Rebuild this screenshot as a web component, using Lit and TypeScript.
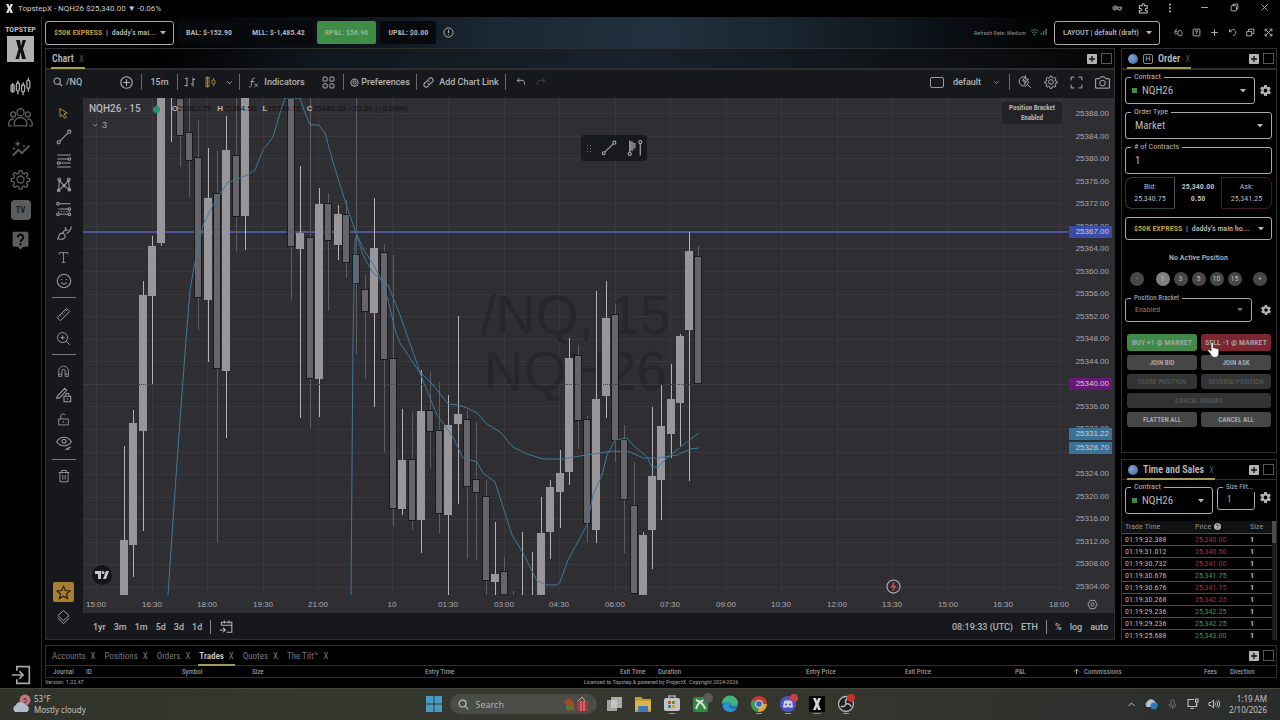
import { LitElement, html, svg, css, nothing } from "lit";
import { customElement } from "lit/decorators.js";
import { classMap } from "lit/directives/class-map.js";
import { styleMap } from "lit/directives/style-map.js";

const icons: Record<string, unknown> = {
  candles: svg`<path d="M3 10v9M3 8v2M9 5v4M9 17v4M15 7v4M15 18v4M21 2v3M21 14v4"/><rect x="1.3" y="10" width="3.4" height="8" rx="1.2"/><rect x="7.3" y="8" width="3.4" height="9" rx="1.2"/><rect x="13.3" y="10" width="3.4" height="8" rx="1.2"/><rect x="19.3" y="5" width="3.4" height="9" rx="1.2"/>`,
  people: svg`<circle cx="12" cy="7" r="3.4"/><circle cx="5" cy="9" r="2.4"/><circle cx="19" cy="9" r="2.4"/><path d="M6 20v-2.500a6 5.500 0 0 1 12 0V20ZM5.500 13.500A4 4 0 0 0 .8 17.500V20H4M18.500 13.500a4 4 0 0 1 4.700 4V20H20"/>`,
  spark: svg`<path d="M2 20l7-7 4 4 9-9" stroke-width="2.400"/><path d="M8 2l1 2.600L11.600 6 9 7 8 9.600 7 7 4.400 6 7 4.600ZM3.500 9l.6 1.700 1.700.6-1.700.7L3.500 14l-.6-2-1.700-.7 1.700-.6ZM15.500 6l.6 1.700 1.700.6-1.700.7-.6 1.700-.6-1.700-1.700-.7 1.700-.6Z" fill="currentColor" stroke="none"/>`,
  gear: svg`<circle cx="12" cy="12" r="4"/><path d="M10.500 2h3l.6 2.800 2 .8 2.400-1.600 2.100 2.100L19 8.500l.8 2 2.700.5v3l-2.800.5-.8 2 1.600 2.400-2.100 2.100-2.400-1.600-2 .8-.5 2.800h-3l-.6-2.800-2-.8-2.400 1.600-2.100-2.100L5 16.500l-.8-2L1.500 14v-3l2.800-.5.8-2-1.600-2.400L5.600 4 8 5.600l2-.8Z"/>`,
  gearSolid: svg`<path fill="currentColor" stroke="none" fill-rule="evenodd" d="M19.400 13a7.500 7.500 0 0 0 0-2l2.100-1.600c.2-.2.2-.4.1-.6l-2-3.500c-.1-.2-.4-.3-.6-.2l-2.500 1a7 7 0 0 0-1.700-1l-.4-2.600c0-.3-.2-.5-.5-.5h-4c-.2 0-.4.200-.5.500l-.4 2.600a7 7 0 0 0-1.700 1l-2.500-1c-.2-.1-.5 0-.6.200l-2 3.500c-.1.200-.1.500.1.600L4.600 11a7.500 7.500 0 0 0 0 2l-2.100 1.600c-.2.200-.2.400-.1.600l2 3.500c.1.200.4.300.6.200l2.500-1c.5.400 1.100.8 1.700 1l.4 2.600c0 .3.200.5.500.5h4c.2 0 .4-.2.500-.5l.4-2.600a7 7 0 0 0 1.700-1l2.500 1c.2.100.5 0 .6-.2l2-3.500c.1-.2.100-.5-.1-.6ZM12 15.500a3.500 3.500 0 1 1 0-7 3.500 3.500 0 0 1 0 7Z"/>`,
  help: svg`<path d="M4 1h16a2 2 0 0 1 2 2v15a2 2 0 0 1-2 2h-4.500L12 23.500 8.500 20H4a2 2 0 0 1-2-2V3a2 2 0 0 1 2-2Z" fill="currentColor" stroke="none"/><path d="M8.500 8a3.500 3.500 0 1 1 5.500 2.900c-1.500 1-2 1.600-2 2.900M12 15.500V18" stroke="#000" stroke-width="2.400"/>`,
  exit: svg`<path d="M7 7V2h15v20H7v-5M1 12h13M10 7.500l4.500 4.500-4.500 4.500"/>`,
  cursor: svg`<path d="M5 3l14 8-6 1.500 4 6.500-3 2-4-6.500-4 4Z"/>`,
  trend: svg`<circle cx="4" cy="20" r="2.300"/><circle cx="20" cy="4" r="2.300"/><path d="M5.700 18.300 18.300 5.700"/>`,
  fib: svg`<path d="M2 3h20M2 9h16M6 15h16M2 21h20"/><circle cx="20" cy="9" r="2"/><circle cx="4" cy="15" r="2"/>`,
  pattern: svg`<path d="M4 20 5 5l7 8 7-8 1 14-8-6ZM4 20l8-7"/><circle cx="4" cy="20" r="2"/><circle cx="5" cy="4" r="2"/><circle cx="19" cy="4" r="2"/><circle cx="20" cy="19" r="2"/><circle cx="12" cy="13" r="1.600"/>`,
  forecast: svg`<circle cx="3" cy="4" r="2"/><path d="M5 4h17M5 12h13M5 20h13" /><circle cx="3" cy="20" r="2"/><circle cx="20" cy="20" r="2"/><circle cx="20" cy="12" r="2"/><path d="M3 12h1M3 16h18" stroke-dasharray="2 2"/>`,
  brush: svg`<path d="M2 21c2-1 2-3 2.500-5 .6-3 4-5 7-3s3 6 0 7.500S4 21 2 21ZM10 12c2-4 4-5 6-5M16 13c3-2 6-5 7-11M14 3c0 3 1 5 4 5"/>`,
  text: svg`<path d="M4 6V3h16v3M12 3v18M8.500 21h7"/>`,
  smile: svg`<circle cx="12" cy="12" r="10"/><path d="M8 14a4.300 4.300 0 0 0 8 0M8.500 9v1.500M15.500 9v1.500"/>`,
  ruler: svg`<path d="M2 17 17 2l5 5L7 22ZM6 13l2 2M9 10l2.500 2.500M12 7l2 2M15 4l2.500 2.500"/>`,
  zoomIn: svg`<circle cx="10.500" cy="10.500" r="8"/><path d="M16.500 16.500 22 22M10.500 7v7M7 10.500h7"/>`,
  magnet: svg`<path d="M3 21V11a9 9 0 0 1 18 0v10h-6V11a3 3 0 0 0-6 0v10ZM3 17h6M15 17h6"/>`,
  penLock: svg`<path d="M2 14 13 2l3 3L6 16l-5 1ZM12 21v-7h10v8H12ZM14.500 14v-2a2.500 2.500 0 0 1 5 0v2M17 17v2"/>`,
  lock: svg`<path d="M3 11h18v11H3ZM7 11V6a4.500 4.500 0 0 1 8.500-2M12 15v3"/>`,
  eye: svg`<path d="M1 10c5-9 17-9 22 0-5 8-17 8-22 0Z"/><circle cx="12" cy="9.500" r="3"/><path d="M14 22l8-4M16 20l4 2"/>`,
  trash: svg`<path d="M3 6h18M8 6V2.500h8V6M5 6v16h14V6M10 10v8M14 10v8"/>`,
  star: svg`<path d="M12 2l3 6.800 7.200.8-5.400 4.900 1.600 7.200L12 18l-6.400 3.700 1.600-7.200L1.800 9.600 9 8.800Z"/>`,
  layers: svg`<path d="M12 1l9 8-9 8-9-8ZM3 13l9 9 9-9"/>`,
  search: svg`<circle cx="10" cy="10" r="7.500"/><path d="M15.500 15.500 22 22"/>`,
  plusCircle: svg`<circle cx="12" cy="12" r="10.500"/><path d="M12 6v12M6 12h12"/>`,
  bars: svg`<path d="M6 3v18M6 5H2M6 19H1M18 3v18M18 7h4M18 16h-4"/>`,
  candleType: svg`<path d="M5 1v22M17 4v4M17 16v4"/><rect x="2" y="3" width="6" height="18"/><rect x="14" y="8" width="6" height="8" rx="2"/>`,
  down: svg`<path d="M4 8l8 8 8-8"/>`,
  fx: svg`<path d="M15 3c-3-1.500-5 0-5.500 3L7 19c-.5 2.500-2 3.500-5 2.500M5 10h9M14 14l8 8M22 14l-8 8"/>`,
  grid4: svg`<rect x="2" y="2" width="7.500" height="7.500" rx="1"/><rect x="14.500" y="2" width="7.500" height="7.500" rx="1"/><rect x="2" y="14.500" width="7.500" height="7.500" rx="1"/><rect x="14.500" y="14.500" width="7.500" height="7.500" rx="1"/>`,
  link: svg`<path d="M10 14a5 5 0 0 0 7 0l4-4a5 5 0 0 0-7-7l-3 3M14 10a5 5 0 0 0-7 0l-4 4a5 5 0 0 0 7 7l3-3"/>`,
  undo: svg`<path d="M8 3 3 8l5 5M3 8h11c5 0 7 4 7 10"/>`,
  redo: svg`<path d="M16 3l5 5-5 5M21 8H10c-5 0-7 4-7 10"/>`,
  quick: svg`<path d="M16.500 16.500 22 22M18 11a8 8 0 1 1-8-8"/><path d="M13 1 8 10h5l-2 6 7-9h-5Z"/>`,
  full: svg`<path d="M2 8V2h6M16 2h6v6M22 16v6h-6M8 22H2v-6"/>`,
  camera: svg`<path d="M1 6h6l2-3h6l2 3h6v15H1Z"/><circle cx="12" cy="13" r="4.500"/>`,
  info: svg`<circle cx="12" cy="12" r="10"/><path d="M12 6v7M12 16v2"/>`,
  help2: svg`<circle cx="12" cy="12" r="12" fill="currentColor" stroke="none"/><path d="M8.500 9a3.500 3.500 0 1 1 5.500 2.900c-1.500 1-2 1.300-2 2.600M12 16.500V19" stroke="#101112" stroke-width="2.600"/>`,
  calendar: svg`<path d="M4 9V4h18v17h-9M4 9h18M9 1v5M17 1v5M1 17h9M7 13l4 4-4 4"/>`,
  wifi: svg`<path d="M1 9c6-6 16-6 22 0M5 13.500c4-4 10-4 14 0M9 17.500c2-1.500 4-1.500 6 0M12 20v1"/>`,
  signal: svg`<path d="M4 20v-5M11 20V9M18 20V3" stroke-width="4"/>`,
  drops: svg`<path d="M7 3c-3 4-5 6-5 8a4.500 4.500 0 0 0 8 3M15 5c-3 4-5 7-5 10a6 6 0 0 0 12 0c0-3-3-7-7-10ZM3 9h6"/>`,
  save: svg`<rect x="3" y="3" width="18" height="18" rx="2"/><path d="M8 8h8M16 8l-4 5v3"/>`,
  plus: svg`<path d="M12 3v18M3 12h18"/>`,
  reset: svg`<path d="M4 4v6h6M4 10c3-6 11-8 15-3s1 13-6 13"/>`,
  copies: svg`<path d="M2 9h13v12H2ZM7 9V3h14v12h-6"/>`,
  expand: svg`<path d="M3 9V3h6M15 3h6v6M21 15v6h-6M9 21H3v-6M3 3l18 18M21 3 3 21"/>`,
  key: svg`<circle cx="7" cy="12" r="5"/><circle cx="7" cy="12" r="1.500"/><path d="M12 10h11v4h-3v3h-4v-3h-4"/>`,
  puzzle: svg`<path d="M3 6h6V4a2.500 2.500 0 0 1 5 0v2h6v6h-1.500a2.500 2.500 0 0 0 0 5H20v5H3v-5h2a2.500 2.500 0 0 0 0-5H3Z"/>`,
  dots: svg`<path d="M12 2v4M12 10v4M12 18v4" stroke-width="4"/>`,
  min: svg`<path d="M3 12h18"/>`,
  restore: svg`<rect x="3" y="7" width="14" height="14" rx="2"/><path d="M8 7V3h13v13h-4"/>`,
  close: svg`<path d="M4 4l16 16M20 4 4 20"/>`,
  bolt: svg`<circle cx="12" cy="12" r="10.500"/><path d="M13 5 8 13h4l-1 6 5-8h-4Z" fill="#c8505c" stroke="#c8505c" stroke-width=".8"/>`,
  hex: svg`<path d="M7 3h10l5 9-5 9H7l-5-9Z"/><circle cx="12" cy="12" r="3.500"/>`,
  up: svg`<path d="M4 16l8-8 8 8"/>`,
  sort: svg`<path d="M12 21V4M4 12l8-8 8 8"/>`,
  mic: svg`<rect x="8.500" y="2" width="7" height="13" rx="3.500"/><path d="M4.500 11a7.500 7.500 0 0 0 15 0M12 18.500V22"/>`,
  monitor: svg`<path d="M14 3H2v14h17v-6M7 21h7"/><path d="M17 2h5v6h-5ZM19.500 8v9"/>`,
  speaker: svg`<path d="M2 9v6h4l5 5V4L6 9ZM14 9c1.500 2 1.500 4 0 6M17 6.500c3 3.500 3 7.500 0 11M20 4c4.500 5 4.500 11 0 16"/>`,
  measure: svg`<path d="M5 2v16M19 6v16" /><path d="M6 4h3v2h3v6H9v3H6Z" fill="currentColor" opacity=".7"/><circle cx="5" cy="20" r="2"/><circle cx="19" cy="4" r="2"/>`,
};

const icon = (name: string, size = 12, stroke = 1.8) => html`<svg
  class="ic" width=${size} height=${size} viewBox="0 0 24 24" fill="none"
  stroke="currentColor" stroke-width=${stroke} aria-hidden="true">${icons[name]}</svg>`;

const caret = html`<svg class="caret" width="6" height="4" viewBox="0 0 6 4" aria-hidden="true"><path d="M0 0h6L3 3.500Z" fill="currentColor"/></svg>`;

const base = css`
  * { box-sizing: border-box; }
  button, input, select { font: inherit; color: inherit; background: none; border: 0; margin: 0; padding: 0; }
  button { cursor: pointer; white-space: nowrap; }
  a { color: inherit; text-decoration: none; }
  .ic { display: block; flex: none; }
  .caret { flex: none; color: #b8b8b8; }
  .tabs { display: flex; align-items: stretch; height: 21px; border-bottom: 2px solid #2c2e30; padding: 0 2px 0 5px; font-size: 10px; font-weight: 600; }
  .tab { display: flex; align-items: center; gap: 5px; position: relative; padding: 0 1px; }
  .tab.on::after { content: ""; position: absolute; left: 0; right: 0; bottom: -1px; height: 2px; background: #a49a5a; }
  .tab i { font-style: normal; font-weight: 400; font-size: 9px; color: #4f5154; }
  .tabtools { margin-left: auto; display: flex; align-items: center; gap: 4px; }
  .add { width: 10px; height: 10px; border-radius: 1px; background: #b4b4b4; color: #111; display: grid; place-items: center; }
  .box { width: 11px; height: 11px; border: 1px solid #55585a; }
`;

const tabTools = html`<span class="tabtools">
  <button class="add" aria-label="Add tab">${icon("plus", 8, 4)}</button>
  <button class="box" aria-label="Maximize"></button>
</span>`;

// x, high, open/close top, open/close bottom, low, rising
type Bar = [number, number, number, number, number, 0 | 1];
const bars: Bar[] = [
  [41, 348, 442, 497, 497, 1], [50, 312, 325, 447, 479, 1], [60, 183, 197, 333, 433, 1],
  [69, 138, 148, 198, 286, 1], [78, 0, 0, 145, 148, 1], [88, 0, 0, 0, 44, 1],
  [97, 0, 0, 38, 69, 0], [106, 0, 34, 63, 99, 0], [115, 22, 59, 200, 232, 0],
  [125, 50, 100, 202, 264, 1], [134, 53, 95, 271, 444, 0], [143, 18, 52, 273, 340, 1],
  [153, 0, 57, 119, 154, 0], [162, 0, 0, 118, 152, 1], [208, 0, 0, 149, 202, 0],
  [217, 68, 135, 151, 320, 1], [227, 0, 139, 281, 330, 0], [236, 90, 106, 281, 319, 1],
  [245, 95, 105, 143, 213, 0], [255, 107, 116, 147, 162, 1], [263, 102, 116, 165, 180, 0],
  [273, 0, 156, 186, 257, 0], [282, 177, 191, 214, 281, 0], [291, 100, 150, 215, 309, 1],
  [301, 146, 154, 262, 354, 0], [310, 157, 260, 411, 428, 0], [319, 311, 362, 411, 417, 1],
  [329, 314, 361, 423, 432, 0], [338, 272, 313, 422, 455, 1], [347, 274, 312, 334, 370, 0],
  [356, 284, 332, 416, 435, 0], [365, 297, 327, 417, 497, 1], [375, 218, 316, 326, 406, 1],
  [384, 312, 321, 389, 461, 0], [393, 324, 381, 395, 462, 0], [403, 382, 398, 483, 497, 0],
  [412, 424, 476, 484, 497, 1], [421, 459, 473, 497, 497, 0], [430, 493, 497, 497, 497, 0],
  [439, 434, 497, 497, 497, 1], [449, 454, 497, 497, 497, 1], [458, 399, 435, 497, 497, 1],
  [467, 382, 389, 434, 461, 1], [477, 352, 375, 394, 430, 1], [486, 240, 260, 374, 387, 1],
  [495, 247, 257, 323, 351, 0], [504, 318, 321, 426, 444, 0], [513, 193, 301, 432, 445, 1],
  [523, 183, 220, 298, 320, 1], [532, 205, 216, 343, 364, 0], [541, 327, 341, 402, 455, 0],
  [551, 364, 407, 496, 496, 0], [560, 434, 437, 497, 497, 1], [569, 309, 378, 432, 471, 1],
  [578, 286, 328, 382, 422, 1], [588, 266, 301, 336, 360, 1], [597, 236, 238, 305, 348, 1],
  [606, 134, 153, 232, 383, 1], [615, 148, 158, 286, 286, 0],
];
const slowMa = "85,497 90,422 97,322 103,242 107,192 112,164 120,127 130,107 145,84 150,83 164,77 172,72 180,52 190,39 197,15 202,0 217,0 221,12 227,27 236,27 242,35 250,64 264,109 272,132 280,157 290,175 305,187 317,217 337,274 350,287 365,306 375,307 384,310 394,315 404,326 417,334 430,349 444,356 460,361 480,361 497,358 517,355 530,353 547,354 560,360 574,360 594,357 607,351 616,350";
const fastMa = "268,497 270,242 272,142 274,137 281,152 290,166 296,177 305,202 313,235 317,245 337,275 347,300 354,317 365,332 370,339 380,360 394,364 400,375 412,384 429,437 440,455 454,483 464,487 474,487 477,484 485,462 504,427 510,397 519,377 524,357 532,342 544,340 550,347 564,359 569,369 575,369 584,360 604,344 616,335";
const times: [number, string][] = [
  [13, "15:00"], [69, "16:30"], [124, "18:00"], [180, "19:30"], [235, "21:00"], [309, "10"], [365, "01:30"],
  [421, "03:00"], [476, "04:30"], [532, "06:00"], [587, "07:30"], [643, "09:00"], [698, "10:30"],
  [754, "12:00"], [809, "13:30"], [865, "15:00"], [920, "16:30"], [976, "18:00"],
];
const TOP = 25388, LOW = 25304;
const priceShare = (p: number) => ((TOP - p) / (TOP - LOW)) * 100;
const prices = Array.from({ length: 22 }, (_, i) => TOP - i * 4);
const tags = [
  { price: 25367, kind: "level" }, { price: 25340, kind: "last" },
  { price: 25331.22, kind: "ma" }, { price: 25328.7, kind: "ma" },
];

@customElement("price-chart")
export class PriceChart extends LitElement {
  static styles = [base, css`
    :host { flex: 1; min-width: 0; display: flex; position: relative; background: #2f2e33; overflow: hidden; font: 8px/14px "Liberation Sans", Arial, sans-serif; color: #a9a8ac; }
    .plot { flex: 1; min-width: 0; height: 100%; display: block; overflow: visible; }
    .grid { stroke: #39383d; }
    .mark { font-size: 55px; fill: #27262b; }
    .time { fill: #a9a8ac; }
    .axis { flex: none; width: 46px; display: flex; flex-direction: column; justify-content: space-between; align-items: flex-end; padding: 9px 5px 19px 0; position: relative; }
    .track { position: absolute; inset: 16px 0 26px 0; }
    .tag { position: absolute; left: 1px; right: 2px; height: 12px; line-height: 12px; margin-top: -6px; padding-right: 3px; text-align: right; color: #cfcfd6; }
    .level { background: #3d4aa8; }
    .last { background: #671777; }
    .ma { background: #3a7298; }
    .legend { position: absolute; left: 6px; top: 4px; display: flex; align-items: center; height: 14px; font-size: 8px; }
    .legend b { font: 500 10px/14px Roboto, sans-serif; color: #b9b8bc; margin-right: 12px; }
    .live { width: 7px; height: 7px; border-radius: 50%; background: #23936f; margin-right: 12px; }
    .legend span { margin-right: 6px; color: #100f13; }
    .legend em { font-style: normal; font-weight: 700; color: #b9b8bc; }
    .count { position: absolute; left: 9px; top: 20px; display: flex; align-items: center; gap: 4px; font-size: 9px; }
    .bracket { position: absolute; right: 52px; top: 4px; width: 60px; height: 22px; border-radius: 2px; background: #232226; color: #bdbdbd; font: 600 7px/10px var(--app-font); text-align: center; padding-top: 1px; }
    .float { position: absolute; left: 498px; top: 37px; height: 26px; padding: 0 3px 0 5px; display: flex; align-items: center; gap: 9px; background: #18191c; border-radius: 3px; color: #a8a8a8; }
    .grip { width: 6px; height: 9px; background: radial-gradient(circle, #707070 0.8px, transparent 1px) 0 0 / 3px 3px; }
    .tv { position: absolute; left: 9px; bottom: 28px; width: 20px; height: 20px; border-radius: 50%; background: #15161a; color: #c9c9c9; display: grid; place-items: center; }
    .bolt { position: absolute; left: 803px; bottom: 19px; color: #b5b2b5; }
    .hex { position: absolute; right: 16px; bottom: 3px; }
  `];

  render() {
    return html`
      <svg class="plot" role="img" aria-label="NQH26 15 minute candles">
        ${times.map(([x]) => svg`<line class="grid" x1=${x + 0.5} x2=${x + 0.5} y1="0" y2="497"/>`)}
        ${prices.map((p) => svg`<line class="grid" x1="0" x2="100%" y1=${15.5 + Math.round((TOP - p) * 5.643)} y2=${15.5 + Math.round((TOP - p) * 5.643)}/>`)}
        <text class="mark" x="50%" y="236" text-anchor="middle">/NQ, 15</text>
        <text class="mark" x="50%" y="292" text-anchor="middle">NQH26</text>
        <rect x="0" y="133" width="100%" height="2" fill="#4a559c"/>
        ${bars.map(([x, h, t, b, l, up]) => svg`
          <rect x=${x} y=${h} width="1" height=${Math.max(0, l - h)} fill=${up ? "#b4b2b6" : "#5e5c61"}/>
          ${b > t ? svg`<rect x=${up ? x - 4 : x - 3.5} y=${up ? t : t + 0.5} width=${up ? 8 : 7} height=${up ? b - t : b - t - 1} fill=${up ? "#98969a" : "#67656b"} stroke=${up ? "none" : "#1b1a1e"}/>` : nothing}`)}
        <g fill="none" stroke="#417898"><polyline points=${slowMa}/><polyline points=${fastMa}/></g>
        <line x1="0" x2="100%" y1="286.500" y2="286.500" stroke="#5a2a66" stroke-dasharray="1 1"/>
        ${times.map(([x, t]) => svg`<text class="time" x=${x} y="509" text-anchor="middle">${t}</text>`)}
      </svg>
      <div class="axis">
        ${prices.map((p) => html`<span>${p.toFixed(2)}</span>`)}
        <div class="track">${tags.map((t) => html`<span class="tag ${t.kind}" style=${styleMap({ top: `${priceShare(t.price)}%` })}>${t.price.toFixed(2)}</span>`)}</div>
      </div>
      <div class="legend"><b>NQH26 · 15</b><i class="live"></i>
        <span><em>O</em>25362.75</span><span><em>H</em>25364.50</span><span><em>L</em>25339.75</span><span><em>C</em>25340.00 −23.50 (−0.09%)</span></div>
      <div class="count">${icon("down", 6, 3)}3</div>
      <div class="bracket">Position Bracket<br>Enabled</div>
      <div class="float"><i class="grip"></i>${icon("trend", 16, 1.6)}${icon("measure", 18, 1.6)}</div>
      <div class="tv"><svg width="14" height="8" viewBox="0 0 14 8"><path fill="currentColor" d="M0 0h6v8H3V3H0ZM11 0h3l-3 8H8Z"/><circle cx="8" cy="1.500" r="1.500" fill="currentColor"/></svg></div>
      <div class="bolt">${icon("bolt", 15, 1.8)}</div>
      <div class="hex">${icon("hex", 11, 2)}</div>`;
  }
}

@customElement("chart-panel")
export class ChartPanel extends LitElement {
  static styles = [base, css`
    :host { flex: 1; min-width: 0; display: flex; flex-direction: column; border: 1px solid #2c2e30; background: #17181b; color: #b4b4b4; }
    .tabs { background: linear-gradient(90deg, #000 10%, #10161d 25%, #18222c 55%, #0d1013 85%, #050505); }
    .bar { display: flex; align-items: center; height: 28px; padding-bottom: 4px; font: 500 9px/12px Roboto, "Open Sans", sans-serif; }
    .bar > * { display: flex; align-items: center; justify-content: center; flex: none; gap: 5px; height: 16px; }
    .bar > .sep { width: 1px; background: #6a6a6a; }
    .bar > .sym { width: 65px; padding-left: 7px; gap: 3px; justify-content: flex-start; }
    .w30 { width: 30px; }
    .w35 { width: 35px; }
    .types { width: 61px; }
    .ind { width: 73px; }
    .pref { width: 72px; }
    .link { width: 88px; }
    .bar .pref { gap: 2px; }
    .bar > .types { gap: 9px; }
    .gold { color: #b08c3c; }
    .dim { color: #45474a; }
    .bar > .grow { flex: 1; }
    .bar > .check { appearance: none; width: 14px; height: 11px; border: 1px solid #999; border-radius: 2px; }
    .bar > .def { width: 65px; gap: 12px; }
    .bar > .tools { gap: 12px; padding: 0 4px 0 8px; }
    .mid { flex: 1; min-height: 0; display: flex; }
    .stack { flex: 1; min-width: 0; display: flex; flex-direction: column; }
    .draw { flex: none; width: 37px; display: flex; flex-direction: column; align-items: center; color: #9d9d9d; padding: 3px 2px 10px 0; }
    .draw button { height: 24px; width: 24px; display: grid; place-items: center; flex: none; }
    .draw hr { width: 24px; height: 1px; border: 0; background: #77797b; margin: 4px 0; flex: none; }
    .draw .fav { margin: auto 0 3px; width: 21px; height: 20px; border-radius: 2px; background: #a87f2e; color: #241b08; }
    .foot { display: flex; align-items: center; height: 26px; padding: 2px 6px 0 10px; gap: 8px; font: 500 9px/12px Roboto, "Open Sans", sans-serif; }
    .foot .sep { width: 1px; height: 14px; background: #8a8a8a; }
    .foot .clock { margin-left: auto; }
  `];

  render() {
    const tool = (n: string, s = 15) => html`<button aria-label=${n}>${icon(n, s, 1.6)}</button>`;
    return html`
      <div class="tabs"><span class="tab on">Chart <i>X</i></span>${tabTools}</div>
      <div class="bar">
        <button class="sym">${icon("search", 10, 2.6)}/NQ</button>
        <button class="w30" aria-label="Add symbol">${icon("plusCircle", 13, 2)}</button><i class="sep"></i>
        <button class="w35">15m</button><i class="sep"></i>
        <span class="types">${icon("bars", 12, 1.8)}<span class="gold">${icon("candleType", 12, 1.8)}</span>${icon("down", 7, 3)}</span><i class="sep"></i>
        <button class="ind">${icon("fx", 11, 1.8)}Indicators</button>
        <button class="w30" aria-label="Templates">${icon("grid4", 13, 1.8)}</button><i class="sep"></i>
        <button class="pref">${icon("gear", 9, 2.4)}Preferences</button><i class="sep"></i>
        <button class="link">${icon("link", 11, 2.2)}Add Chart Link</button><i class="sep"></i>
        <button class="w30" aria-label="Undo">${icon("undo", 10, 2.2)}</button>
        <button class="dim" aria-label="Redo">${icon("redo", 10, 2.2)}</button>
        <span class="grow"></span>
        <input class="check" type="checkbox" aria-label="Layout">
        <button class="def">default ${icon("down", 7, 2.6)}</button><i class="sep"></i>
        <span class="tools">${icon("quick", 14, 1.6)}${icon("gear", 14, 1.6)}${icon("full", 13, 1.8)}${icon("camera", 15, 1.6)}</span>
      </div>
      <div class="mid">
        <div class="draw">
          <button class="gold" aria-label="Cursor">${icon("cursor", 13, 1.8)}</button>
          ${["trend", "fib", "pattern", "forecast", "brush", "text", "smile"].map((n) => tool(n, n === "text" ? 13 : 16))}
          <hr>${["ruler", "zoomIn"].map((n) => tool(n))}
          <hr>${["magnet", "penLock", "lock", "eye"].map((n) => tool(n, n === "penLock" || n === "eye" ? 16 : 13))}
          <hr>${tool("trash", 14)}
          <button class="fav" aria-label="Favorites">${icon("star", 15, 1.8)}</button>
          ${tool("layers", 15)}
        </div>
        <div class="stack">
          <price-chart></price-chart>
          <div class="foot">
            ${["1yr", "3m", "1m", "5d", "3d", "1d"].map((r) => html`<button>${r}</button>`)}
            <i class="sep"></i><button aria-label="Go to date">${icon("calendar", 14, 1.8)}</button>
            <span class="clock">08:19:33 (UTC)</span><button>ETH</button><i class="sep"></i>
            <button>%</button><button>log</button><button>auto</button>
          </div>
        </div>
      </div>`;
  }
}

const field = css`
  .row { display: flex; align-items: center; gap: 4px; }
  .field { position: relative; flex: 1; min-width: 0; height: 27px; border: 1px solid #a8a8a8; border-radius: 3px; display: flex; align-items: center; padding: 0 8px 0 6px; font-size: 11px; }
  .field > label { position: absolute; left: 5px; top: -6px; padding: 0 3px; font-size: 8px; line-height: 10px; background: #000; white-space: nowrap; }
  .field select, .field input { appearance: none; flex: 1; min-width: 0; width: 0; outline: 0; padding-left: 3px; }
  .field.low { height: 24px; font-size: 8px; }
  .field.low > label { font-size: 7px; }
  .sq { width: 5px; height: 5px; background: #3f8a4d; flex: none; margin-right: 2px; }
  .cog { width: 13px; display: grid; place-items: center; color: #b4b4b4; }
  .globe { width: 10px; height: 10px; border-radius: 50%; background: radial-gradient(circle at 35% 35%, #7fa3cf, #3d64a0); }
`;

@customElement("order-panel")
export class OrderPanel extends LitElement {
  static styles = [base, field, css`
    :host { display: block; flex: none; height: 405px; border: 1px solid #2c2e30; background: #000; color: #b8b8b8; }
    .h { width: 10px; height: 10px; border: 1px solid #8a8a8a; border-radius: 2px; display: grid; place-items: center; font-size: 8px; line-height: 8px; font-weight: 400; }
    .body { display: flex; flex-direction: column; gap: 8px; padding: 7px 4px 0 3px; }
    .body > .field { flex: none; }
    .quote { display: grid; grid-template-columns: 50px 1fr 51px; height: 32px; text-align: center; font-size: 8px; line-height: 12px; margin-top: -5px; }
    .quote > div { display: flex; flex-direction: column; justify-content: center; }
    .bid { border: 1px solid #24402a; border-radius: 7px 0 0 7px; border-right-color: #555; }
    .ask { border: 1px solid #3f1a24; border-radius: 0 7px 7px 0; }
    .mid { font-weight: 700; }
    .acct { height: 23px; border: 1px solid #a8a8a8; border-radius: 3px; display: flex; align-items: center; justify-content: space-between; padding: 0 7px 0 8px; font-size: 8px; font-weight: 500; }
    .acct b { color: #b59b2f; }
    .none { text-align: center; font-size: 8px; font-weight: 500; line-height: 12px; margin-top: 4px; }
    .qty { display: flex; justify-content: space-between; padding: 0 5px; }
    .nums { display: flex; gap: 4px; }
    .qty button { width: 14px; height: 14px; border-radius: 50%; background: #474747; font-size: 8px; line-height: 14px; text-align: center; }
    .qty .on { background: #808080; color: #c4c4c4; }
    .low { color: #7f7f7f; }
    .low > label { color: #b8b8b8; }
    .low > .caret { color: #6a6a6a; }
    .bracket { margin-top: 4px; gap: 7px; }
    .acts { display: grid; grid-template-columns: 1fr 1fr; gap: 4px; padding: 4px 1px 0 2px; }
    .acts button { height: 15px; border-radius: 3px; background: #464646; font-size: 7px; font-weight: 600; color: #aaa; }
    .acts .buy { height: 17px; background: #3f8a46; font-size: 8px; font-weight: 500; }
    .acts .sell { height: 17px; background: #7c2632; font-size: 8px; font-weight: 500; }
    .acts .off { background: #333; color: #525252; }
    .acts .wide { grid-column: 1 / -1; }
    .sellbox { position: relative; display: grid; }
    .hand { position: absolute; left: 6px; bottom: -7px; }
  `];

  render() {
    const acts: [string, string][] = [["JOIN BID", ""], ["JOIN ASK", ""], ["CLOSE POSITION", "off"], ["REVERSE POSITION", "off"], ["CANCEL ORDERS", "off wide"], ["FLATTEN ALL", ""], ["CANCEL ALL", ""]];
    return html`
      <div class="tabs"><span class="tab on"><i class="globe"></i><span class="h">H</span>Order <i>X</i></span>${tabTools}</div>
      <div class="body">
        <div class="row"><div class="field"><label for="c">Contract</label><i class="sq"></i><select id="c"><option>NQH26</option></select>${caret}</div><button class="cog" aria-label="Contract settings">${icon("gearSolid", 13)}</button></div>
        <div class="field"><label for="t">Order Type</label><select id="t"><option>Market</option></select>${caret}</div>
        <div class="field"><label for="n"># of Contracts</label><input id="n" value="1"></div>
        <div class="quote"><div class="bid"><span>Bid:</span><span>25,340.75</span></div><div class="mid"><span>25,340.00</span><span>0.50</span></div><div class="ask"><span>Ask:</span><span>25,341.25</span></div></div>
        <button class="acct"><span><b>$50K EXPRESS</b>&nbsp; |&nbsp; daddy's main ho...</span>${caret}</button>
        <div class="none">No Active Position</div>
        <div class="qty"><button>-</button><span class="nums">${["1", "3", "5", "10", "15"].map((n) => html`<button class=${classMap({ on: n === "1" })}>${n}</button>`)}</span><button>+</button></div>
        <div class="row bracket"><div class="field low"><label for="b">Position Bracket</label><select id="b"><option>Enabled</option></select>${caret}</div><button class="cog" aria-label="Bracket settings">${icon("gearSolid", 12)}</button></div>
        <div class="acts">
          <button class="buy">BUY +1 @ MARKET</button>
          <span class="sellbox"><button class="sell">SELL -1 @ MARKET</button>
            <svg class="hand" width="13" height="16" viewBox="0 0 13 16"><path d="M4 1.500a1.200 1.200 0 0 1 2.400 0V6l1-.3c.6-.2 1 .1 1.200.6.6-.3 1.300-.1 1.500.5.9-.3 1.700.1 1.700 1V11c0 2.500-1.300 4.500-4 4.500S4.500 14 3.500 12L1 9c-.6-1 .6-1.900 1.500-1.200L4 9Z" fill="#fff" stroke="#222" stroke-width=".7"/></svg></span>
          ${acts.map(([t, c]) => html`<button class=${c} ?disabled=${c !== ""}>${t}</button>`)}
        </div>
      </div>`;
  }
}

const sales: [string, string, boolean][] = [
  ["01:19:32.388", "25,340.00", false], ["01:19:31.012", "25,340.50", false], ["01:19:30.732", "25,341.00", false],
  ["01:19:30.676", "25,341.75", true], ["01:19:30.676", "25,341.75", false], ["01:19:30.268", "25,342.25", false],
  ["01:19:29.236", "25,342.25", true], ["01:19:29.236", "25,342.25", true], ["01:19:25.688", "25,343.00", true],
];

@customElement("sales-panel")
export class SalesPanel extends LitElement {
  static styles = [base, field, css`
    :host { flex: 1; min-height: 0; display: flex; flex-direction: column; border: 1px solid #2c2e30; border-bottom: 0; background: #000; color: #b8b8b8; overflow: hidden; }
    .tabs { height: 20px; flex: none; border-bottom-width: 1px; }
    .row { padding: 7px 4px 0 3px; align-items: flex-start; }
    .size { flex: none; width: 38px; height: 23px; font-size: 9px; }
    .cog { height: 20px; }
    .row .size > label { font-size: 7px; }
    .scroll { flex: 1; min-height: 0; overflow: hidden; margin-top: 7px; display: flex; }
    table { flex: 1; border-collapse: collapse; table-layout: fixed; font-size: 8px; }
    th { font-weight: 400; text-align: left; color: #8f8f8f; background: #101112; }
    th, td { height: 12px; line-height: 11px; padding: 0 0 0 3px; border-bottom: 1px solid #4a4c4e; white-space: nowrap; }
    th .ic { display: inline-block; vertical-align: -1px; margin-left: 1px; color: #b0b0b0; }
    .c1 { width: 70px; }
    .c2 { width: 55px; }
    .up { color: #2f9a48; }
    .dn { color: #a82a3c; }
    .one { font-weight: 700; }
    .bar { width: 4px; background: #1b1c1d; }
    .thumb { height: 22px; background: #4a4b4c; }
  `];

  render() {
    return html`
      <div class="tabs"><span class="tab on"><i class="globe"></i>Time and Sales <i>X</i></span>${tabTools}</div>
      <div class="row">
        <div class="field"><label for="c">Contract</label><i class="sq"></i><select id="c"><option>NQH26</option></select>${caret}</div>
        <div class="field size"><label for="s">Size Filt...</label><input id="s" value="1"></div>
        <button class="cog" aria-label="Settings">${icon("gearSolid", 13)}</button>
      </div>
      <div class="scroll"><table>
        <thead><tr><th class="c1">Trade Time</th><th class="c2">Price ${icon("help2", 7)}</th><th>Size</th></tr></thead>
        <tbody>${sales.map(([t, p, up]) => html`<tr><td>${t}</td><td class=${up ? "up" : "dn"}>${p}</td><td class="one">1</td></tr>`)}</tbody>
      </table><div class="bar"><div class="thumb"></div></div></div>`;
  }
}

const cols: [string, number][] = [
  ["Journal", 33], ["ID", 96], ["Symbol", 70], ["Size", 173], ["Entry Time", 195], ["Exit Time", 38], ["Duration", 148],
  ["Entry Price", 99], ["Exit Price", 110], ["P&L", 69], ["Commissions", 120], ["Fees", 26], ["Direction", 53],
];

@customElement("trades-panel")
export class TradesPanel extends LitElement {
  static styles = [base, css`
    :host { display: block; flex: none; border: 1px solid #2c2e30; background: #000; color: #b0b0b0; margin: 5px 3px 0 3px; }
    .tabs { gap: 7px; height: 20px; font-weight: 400; font-size: 9px; border-bottom-width: 1px; color: #77797b; }
    .tab.on { color: #c8c8c8; font-weight: 600; }
    .tab i { color: #77797b; }
    table { width: 100%; table-layout: fixed; border-collapse: collapse; font-size: 7px; }
    th { font-weight: 400; text-align: left; padding: 1px 0 0 7px; height: 11px; line-height: 10px; white-space: nowrap; }
    th .ic { display: inline-block; vertical-align: -1px; margin: 0 4px 0 -11px; }
  `];

  render() {
    const total = cols.reduce((a, c) => a + c[1], 0);
    return html`
      <div class="tabs">${["Accounts", "Positions", "Orders", "Trades", "Quotes", "The Tilt™"].map((t) => html`<span class="tab ${t === "Trades" ? "on" : ""}">${t} <i>X</i></span>`)}${tabTools}</div>
      <table><thead><tr>${cols.map(([t, w]) => html`<th style=${styleMap({ width: `${(w / total) * 100}%` })}>${t === "Commissions" ? icon("sort", 7, 3) : nothing}${t}</th>`)}</tr></thead></table>`;
  }
}

@customElement("task-bar")
export class TaskBar extends LitElement {
  static styles = [base, css`
    :host { flex: none; height: 32px; display: grid; grid-template-columns: 1fr auto 1fr; align-items: center; background: linear-gradient(90deg, #30332a, #35382f 30%, #35372f 60%, #2a2d2c); border-top: 1px solid #45473f; color: #c2c2c2; font: 8px/11px "Noto Sans", "Open Sans", sans-serif; padding: 0 13px 1px 12px; }
    .weather { display: flex; align-items: center; gap: 2px; }
    .apps { display: flex; align-items: center; gap: 13px; }
    .find { display: flex; align-items: center; gap: 7px; width: 147px; height: 20px; border-radius: 10px; background: #4a4d47; padding: 0 8px; margin: 0 -4px 0 -5px; font-size: 9px; }
    .find input { flex: 1; min-width: 0; color: #b5b5b5; }
    .find input::placeholder { color: #b0b0b0; }
    .app { display: block; width: 16px; height: 20px; }
    .app svg { display: block; overflow: visible; }
    .tray { justify-self: end; display: flex; align-items: center; gap: 9px; }
    .clock { text-align: right; }
    .dim { color: #74766f; }
  `];

  render() {
    const art = [
      svg`<rect x="5" y="3" width="11" height="11" fill="#aaa"/><rect x="1" y="6" width="10" height="11" fill="#d0d0d0" opacity=".7"/>`,
      svg`<path d="M0 3h6l2 2h8v13H0Z" fill="#c99a30"/><path d="M0 7h16v9H0Z" fill="#d9b450"/><path d="M3 12h10v6H3Z" fill="#3e7cb5"/>`,
      svg`<path d="M5 4V2h6v2" fill="none" stroke="#aaa" stroke-width="1.500"/><rect y="4" width="16" height="13" rx="2" fill="#c4c4c4"/><path d="M4 7h3v3H4Z" fill="#c8512f"/><path d="M8 7h3v3H8Z" fill="#5d9a3c"/><path d="M4 11h3v3H4Z" fill="#337fb8"/><path d="M8 11h3v3H8Z" fill="#cfa02f"/><rect x="5" y="19" width="6" height="1" fill="#999"/>`,
      svg`<rect y="3" width="15" height="15" rx="2" fill="#2c8b3e"/><path d="M3 15c1-5 4-7 9-10M12 15C11 10 8 8 3 6" fill="none" stroke="#ddd" stroke-width="2"/><circle cx="15" cy="4" r="5" fill="#595b55"/>`,
      svg`<circle cx="8" cy="10" r="8" fill="#2277ac"/><path d="M0 10a8 8 0 0 1 16-1c0 3-5 4-7 2 1-3-4-4-9-1Z" fill="#45b37d"/><path d="M1 13c1-5 6-5 7-3-3 3 1 6 6 5-4 5-11 3-13-2Z" fill="#2f91cd"/>`,
      svg`<circle cx="8" cy="10" r="8" fill="#c8382f"/><path d="M8 10 1 6a8 8 0 0 0 6 12Z" fill="#3a9850"/><path d="M8 10h8a8 8 0 0 1-9 8Z" fill="#d6ac32"/><circle cx="8" cy="10" r="4" fill="#d5d5d5"/><circle cx="8" cy="10" r="3" fill="#3970be"/><rect x="5" y="19" width="6" height="1" fill="#999"/>`,
      svg`<circle cx="8" cy="10" r="8" fill="#4a55c0"/><path d="M4 7c3-1 5-1 8 0l1 6-3 1-1-1H7l-1 1-3-1Z" fill="#d0d0e4"/><circle cx="6" cy="10.500" r="1" fill="#4a55c0"/><circle cx="10" cy="10.500" r="1" fill="#4a55c0"/><circle cx="14" cy="4" r="4" fill="#cc4148"/><rect x="5" y="19" width="6" height="1" fill="#999"/>`,
      svg`<rect y="2" width="16" height="16" fill="#050505"/><path d="M4 4h3l1 3.500L9 4h3l-2.500 6L12 16H9l-1-3.500L7 16H4l2.500-6Z" fill="#d8d8d8"/><rect x="4" y="19" width="8" height="1" fill="#888"/>`,
      svg`<circle cx="8" cy="10" r="7.500" fill="#202020" stroke="#b5b5b5" stroke-width="1.300"/><path d="M8 10c-1-3 0-5 2-6M8 10c3-1 5 1 5 3M8 10c-1 3-4 3-5 2" fill="none" stroke="#b5b5b5" stroke-width="1.500"/><circle cx="13" cy="4" r="4" fill="#c7322b"/><rect x="5" y="19" width="6" height="1" fill="#999"/>`,
    ];
    return html`
      <div class="weather"><svg width="20" height="22" viewBox="0 0 20 22"><circle cx="13" cy="7" r="5.500" fill="#c4747a"/><text x="11" y="10" font-size="7" fill="#401818">5</text><path d="M3 19a4 4 0 0 1 1-7c1-4 8-4 9 0 5 0 5 7 1 7Z" fill="#b4bccb"/></svg><span>53°F<br>Mostly cloudy</span></div>
      <div class="apps">
        <svg width="16" height="16" viewBox="0 0 16 16"><path d="M0 0h7.500v7.500H0ZM8.500 0H16v7.500H8.500ZM0 8.500h7.500V16H0ZM8.500 8.500H16V16H8.500Z" fill="#4a9cc4"/></svg>
        <label class="find">${icon("search", 11, 2.6)}<input placeholder="Search" aria-label="Search"><svg width="26" height="14" viewBox="0 0 26 14"><path d="M1 4l5-3 4 3 2 8-7 2Z" fill="#a04a26"/><path d="M3 9l5-1 3 5H3Z" fill="#4d7a38"/><rect x="14" y="4" width="11" height="10" fill="#b3303a"/><path d="M18 4v10M21 4v10M15 4l4-4 3 4" stroke="#c9a6a0" fill="none"/></svg></label>
        ${art.map((a) => html`<button class="app" aria-label="App"><svg width="16" height="20" viewBox="0 0 16 20">${a}</svg></button>`)}
      </div>
      <div class="tray">${icon("up", 9, 2.6)}
        <svg width="13" height="12" viewBox="0 0 13 12"><path d="M2 9a3 3 0 0 1 0-5c2-4 7-3 8 0 3 1 3 5 0 5Z" fill="#b8c0c6"/><circle cx="9" cy="8" r="3.500" fill="#2a78b8"/></svg>
        <span class="dim">${icon("mic", 11, 2)}</span>${icon("monitor", 12, 2.2)}${icon("speaker", 12, 2)}
        <span class="clock">1:19 AM<br>2/10/2026</span></div>`;
  }
}

@customElement("app-root")
export class AppRoot extends LitElement {
  static styles = [base, css`
    :host { --app-font: "Roboto Condensed", "Liberation Sans Narrow", Roboto, sans-serif; display: flex; flex-direction: column; height: 100vh; background: #000; color: #b8b8b8; font: 9px/12px var(--app-font); overflow: hidden; }
    .title { flex: none; height: 17px; display: flex; align-items: center; padding: 0 11px 0 6px; font: 8px/12px Roboto, "Noto Sans", sans-serif; color: #c8c8c8; gap: 5px; }
    .win { margin-left: auto; display: flex; gap: 21px; }
    .ext { display: flex; gap: 16px; margin-right: 4px; }
    .shell { flex: 1; min-height: 0; display: flex; }
    .side { flex: none; width: 42px; border-right: 1px solid #2c2e30; display: flex; flex-direction: column; align-items: center; gap: 10px; color: #5c5c5c; padding: 7px 0 3px; }
    .logo { display: flex; flex-direction: column; align-items: center; width: 28px; color: #b4b4b4; font: 700 8px/12px var(--app-font); }
    .logo svg { display: block; }
    .side button { display: grid; place-content: center; height: 21px; }
    .side .lit { color: #a8a8a8; margin-top: 4px; }
    .side .tvb { width: 20px; height: 20px; border-radius: 4px; background: #5c5c5c; color: #222; font-size: 9px; font-weight: 700; }
    .side .out { margin-top: auto; color: #a8a8a8; }
    .main { flex: 1; min-width: 0; display: flex; flex-direction: column; }
    .head { flex: none; height: 31px; display: flex; align-items: center; gap: 4px; padding: 0 7px 0 3px; background: linear-gradient(90deg, #000 8%, #0b1118 24%, #1a2733 36%, #21313f 50%, #19252f 60%, #0a0e13 74%, #000 82%); font-size: 8px; font-weight: 600; }
    .pick { height: 24px; border: 1px solid #a8a8a8; border-radius: 3px; display: flex; flex: none; align-items: center; justify-content: space-between; padding: 0 7px 0 8px; background: #000; font-weight: 500; }
    .acct { width: 129px; }
    .lay { width: 106px; margin: 0 10px 0 2px; }
    .gold { color: #b8952f; }
    .chip { height: 23px; line-height: 23px; padding: 0 8px; border-radius: 2px; background: #08090c; white-space: nowrap; }
    .green { background: #3f8c46; color: #8db990; }
    .round { padding: 0 3px; }
    .rate { margin-left: auto; font-size: 6px; color: #8c8c8c; font-weight: 400; white-space: nowrap; }
    .ok { display: flex; gap: 1px; color: #3c8a4c; }
    .acts { display: flex; gap: 9px; }
    .cols { flex: 1; min-height: 0; display: flex; gap: 6px; padding: 0 3px; }
    .right { flex: none; width: 156px; display: flex; flex-direction: column; gap: 6px; }
    .foot { flex: none; display: grid; grid-template-columns: 1fr auto 1fr; height: 10px; margin: 0 3px; font-size: 6px; line-height: 8px; color: #a0a0a0; }
  `];

  render() {
    return html`
      <header class="title"><svg width="7" height="9" viewBox="0 0 7 9"><path d="M0 0h2.500l1 2.600L4.500 0H7L5 4.500 7 9H4.500l-1-2.600L2.500 9H0l2-4.500Z" fill="#ddd"/></svg><span>TopstepX - NQH26 $25,340.00 ▼ -0.06%</span>
        <span class="win"><span class="ext">${icon("key", 10, 2)}${icon("puzzle", 11, 2.2)}${icon("dots", 10)}</span>${icon("min", 9, 2.2)}${icon("restore", 9, 2.2)}${icon("close", 9, 2.2)}</span></header>
      <div class="shell">
        <nav class="side">
          <div class="logo">TOPSTEP<svg width="27" height="26" viewBox="0 0 27 26"><rect width="27" height="26" fill="#b0b0b0"/><path d="M9 4h4l1 6 1.500-6H19l-3 9 3 10h-4l-1.500-7L12 23H8.500l3-10Z" fill="#111"/></svg></div>
          <button class="lit" aria-label="Trade">${icon("candles", 21, 1.5)}</button>
          <button aria-label="Community">${icon("people", 25, 1.3)}</button>
          <button aria-label="Insights">${icon("spark", 20)}</button>
          <button aria-label="Settings">${icon("gear", 21, 1.5)}</button>
          <button class="tvb">TV</button>
          <button aria-label="Help">${icon("help", 19)}</button>
          <button class="out" aria-label="Log out">${icon("exit", 20, 2)}</button>
        </nav>
        <div class="main">
          <div class="head">
            <button class="pick acct"><span><b class="gold">$50K EXPRESS</b>&nbsp; |&nbsp; daddy's mai...</span>${caret}</button>
            <span class="chip">BAL: $-152.90</span><span class="chip">MLL: $-1,485.42</span><span class="chip green">RP&amp;L: $56.96</span><span class="chip">UP&amp;L: $0.00</span>
            <button class="round" aria-label="Info">${icon("info", 11, 2)}</button>
            <span class="rate">Refresh Rate: Medium</span><span class="ok">${icon("wifi", 9, 2.6)}${icon("signal", 8)}</span>
            <button class="pick lay"><span>LAYOUT | default (draft)</span>${caret}</button>
            <span class="acts">${["drops", "save", "plus", "reset", "copies", "expand"].map((n) => icon(n, 9, 2.4))}</span>
          </div>
          <div class="cols"><chart-panel></chart-panel><div class="right"><order-panel></order-panel><sales-panel></sales-panel></div></div>
          <trades-panel></trades-panel>
          <footer class="foot"><span>Version: 1.22.47</span><span>Licensed to Topstep &amp; powered by ProjectX. Copyright 2024-2026</span></footer>
        </div>
      </div>
      <task-bar></task-bar>`;
  }
}
